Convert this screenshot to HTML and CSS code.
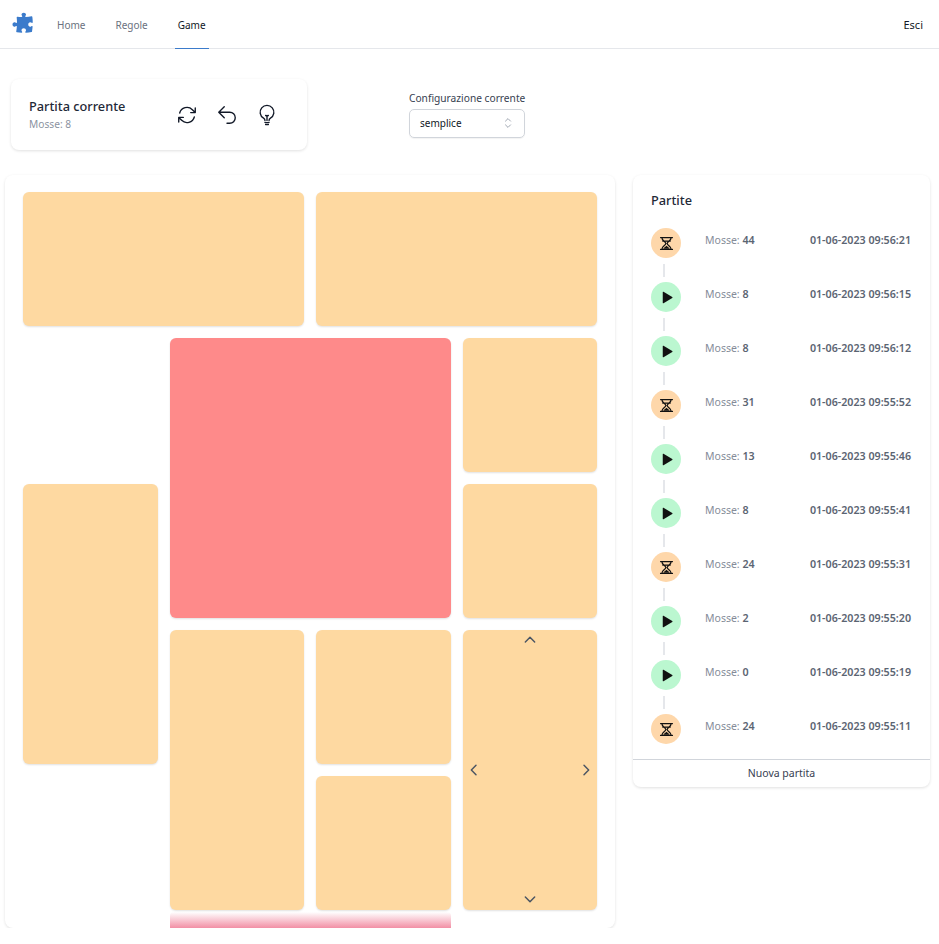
FILE: index.html
```html
<!DOCTYPE html>
<html lang="it">
<head>
  <meta charset="UTF-8" />
  <meta name="viewport" content="width=device-width, initial-scale=1.0" />
  <title>Game</title>
  <link rel="stylesheet" href="styles.css">
</head>
<body>
  <svg class="defs" width="0" height="0">
    <symbol id="hourglass" viewBox="0 0 24 24">
      <path d="M2.500 2.500h19M4.500 2.500c0 5 6 6 6.500 9.500-.5 3.500-6.500 4.500-6.500 9.500M19.500 2.500c0 5-6 6-6.500 9.500.5 3.500 6.500 4.500 6.500 9.500M2.500 21.500h19M6 8h12" fill="none" stroke="currentColor" stroke-width="2" stroke-linecap="round" stroke-linejoin="round"/>
      <path d="M7 20.500c.5-2 3.500-3.500 5-5 1.500 1.500 4.500 3 5 5z" fill="currentColor"/>
    </symbol>
    <symbol id="play" viewBox="0 0 24 24">
      <path d="M6 3.500v17a.8.8 0 0 0 1.200.7l14-8.500a.8.8 0 0 0 0-1.400l-14-8.500A.8.8 0 0 0 6 3.500z" fill="currentColor"/>
    </symbol>
  </svg>

  <nav class="navbar">
    <div class="nav-left">
      <svg class="logo" viewBox="0 0 24 24" fill="currentColor"><path d="M11.250 5.337c0-.355-.186-.676-.401-.959a1.560 1.560 0 0 1-.349-.878c0-1.036 1.007-1.875 2.250-1.875S15 2.464 15 3.500c0 .322-.1.626-.349.878-.215.283-.401.604-.401.959 0 .332.278.598.610.578 1.910-.114 3.790-.342 5.632-.676a.75.75 0 0 1 .878.645 49.170 49.170 0 0 1 .376 5.452.657.657 0 0 1-.660.664c-.354 0-.675-.186-.958-.401a1.647 1.647 0 0 0-1.003-.349c-1.035 0-1.875 1.007-1.875 2.250s.84 2.250 1.875 2.250c.369 0 .713-.128 1.003-.349.283-.215.604-.401.959-.401.310 0 .557.262.534.571a48.774 48.774 0 0 1-.595 4.845.75.75 0 0 1-.610.610c-1.820.317-3.673.533-5.555.642a.58.58 0 0 1-.611-.581c0-.355.186-.676.401-.959.221-.29.349-.634.349-1.003 0-1.035-1.007-1.875-2.250-1.875s-2.250.84-2.250 1.875c0 .369.128.713.349 1.003.215.283.401.604.401.959a.641.641 0 0 1-.658.643 49.118 49.118 0 0 1-4.708-.36.75.75 0 0 1-.645-.878c.293-1.614.504-3.257.629-4.924A.53.53 0 0 0 5.337 15c-.355 0-.676.186-.959.401-.29.221-.634.349-1.003.349-1.036 0-1.875-1.007-1.875-2.250s.84-2.250 1.875-2.250c.369 0 .713.128 1.003.349.283.215.604.401.959.401a.656.656 0 0 0 .659-.663 47.703 47.703 0 0 0-.31-4.820.75.75 0 0 1 .83-.832c1.343.155 2.703.254 4.077.294a.64.64 0 0 0 .657-.642z"/></svg>
      <a class="nav-link" href="#">Home</a>
      <a class="nav-link" href="#">Regole</a>
      <a class="nav-link active" href="#">Game</a>
    </div>
    <a class="logout" href="#">Esci</a>
  </nav>

  <section class="toolbar">
    <div class="current-card">
      <div class="current-info">
        <h3>Partita corrente</h3>
        <p>Mosse: 8</p>
      </div>
      <div class="actions">
        <svg viewBox="0 0 24 24" class="action"><path d="M16.023 9.348h4.992v-.001M2.985 19.644v-4.992m0 0h4.992m-4.993 0 3.181 3.183a8.250 8.250 0 0 0 13.803-3.700M4.031 9.865a8.250 8.250 0 0 1 13.803-3.700l3.181 3.182m0-4.991v4.990"/></svg>
        <svg viewBox="0 0 24 24" class="action"><path d="M9 15 3 9m0 0 6-6M3 9h12a6 6 0 0 1 0 12h-3"/></svg>
        <svg viewBox="0 0 24 24" class="action"><path d="M12 18v-5.250m0 0a6.010 6.010 0 0 0 1.500-.189m-1.500.189a6.010 6.010 0 0 1-1.500-.189m3.750 7.478a12.060 12.060 0 0 1-4.500 0m3.750 2.383a14.406 14.406 0 0 1-3 0M14.250 18v-.192c0-.983.658-1.823 1.508-2.316a7.500 7.500 0 1 0-7.517 0c.85.493 1.509 1.333 1.509 2.316V18"/></svg>
      </div>
    </div>
    <div class="config">
      <label>Configurazione corrente</label>
      <div class="select">
        <span>semplice</span>
        <svg viewBox="0 0 20 20"><path d="M6.500 8 10 4.500 13.500 8M6.500 12 10 15.500 13.500 12"/></svg>
      </div>
    </div>
  </section>

  <main class="content">
    <div class="board-card">
      <div class="board">
        <div class="piece p-a"></div>
        <div class="piece p-b"></div>
        <div class="piece p-c"></div>
        <div class="piece red p-d"></div>
        <div class="piece p-e"></div>
        <div class="piece p-f"></div>
        <div class="piece p-g"></div>
        <div class="piece p-h"></div>
        <div class="piece p-i"></div>
        <div class="piece p-j">
          <svg class="arrow up" viewBox="0 0 24 24"><path d="m5 15 7-7 7 7"/></svg>
          <svg class="arrow left" viewBox="0 0 24 24"><path d="m15 5-7 7 7 7"/></svg>
          <svg class="arrow right" viewBox="0 0 24 24"><path d="m9 5 7 7-7 7"/></svg>
          <svg class="arrow down" viewBox="0 0 24 24"><path d="m5 9 7 7 7-7"/></svg>
        </div>
        <div class="exit"></div>
      </div>
    </div>

    <aside class="games-card">
      <h3>Partite</h3>
      <ul class="games">
        <li><span class="dot lost"><svg><use href="#hourglass"/></svg></span><span class="moves">Mosse: <b>44</b></span><b class="date">01-06-2023 09:56:21</b></li>
        <li><span class="dot won"><svg><use href="#play"/></svg></span><span class="moves">Mosse: <b>8</b></span><b class="date">01-06-2023 09:56:15</b></li>
        <li><span class="dot won"><svg><use href="#play"/></svg></span><span class="moves">Mosse: <b>8</b></span><b class="date">01-06-2023 09:56:12</b></li>
        <li><span class="dot lost"><svg><use href="#hourglass"/></svg></span><span class="moves">Mosse: <b>31</b></span><b class="date">01-06-2023 09:55:52</b></li>
        <li><span class="dot won"><svg><use href="#play"/></svg></span><span class="moves">Mosse: <b>13</b></span><b class="date">01-06-2023 09:55:46</b></li>
        <li><span class="dot won"><svg><use href="#play"/></svg></span><span class="moves">Mosse: <b>8</b></span><b class="date">01-06-2023 09:55:41</b></li>
        <li><span class="dot lost"><svg><use href="#hourglass"/></svg></span><span class="moves">Mosse: <b>24</b></span><b class="date">01-06-2023 09:55:31</b></li>
        <li><span class="dot won"><svg><use href="#play"/></svg></span><span class="moves">Mosse: <b>2</b></span><b class="date">01-06-2023 09:55:20</b></li>
        <li><span class="dot won"><svg><use href="#play"/></svg></span><span class="moves">Mosse: <b>0</b></span><b class="date">01-06-2023 09:55:19</b></li>
        <li><span class="dot lost"><svg><use href="#hourglass"/></svg></span><span class="moves">Mosse: <b>24</b></span><b class="date">01-06-2023 09:55:11</b></li>
      </ul>
      <button class="new-game">Nuova partita</button>
    </aside>
  </main>
</body>
</html>
```

FILE: styles.css
```css
* {
  box-sizing: border-box;
}
body {
  margin: 0;
  font-family: "Noto Sans", sans-serif;
  background: #fff;
  color: #111827;
  overflow: hidden;
}
.defs {
  display: none;
}
.navbar {
  height: 49px;
  display: flex;
  align-items: center;
  justify-content: space-between;
  padding: 0 16px 0 11px;
  border-bottom: 1px solid #e5e7eb;
}
.nav-left {
  display: flex;
  align-items: center;
  height: 100%;
}
.logo {
  width: 24px;
  height: 24px;
  color: #3b7bcb;
  margin-right: 19px;
  margin-bottom: 3px;
}
.nav-link {
  height: 49px;
  line-height: 50px;
  padding: 0 3px;
  font-size: 10px;
  color: #6b7280;
  text-decoration: none;
  margin-right: 24px;
}
.nav-link.active {
  color: #111827;
  border-bottom: 1px solid #3b7bcb;
}
.logout {
  font-size: 11px;
  line-height: 49px;
  color: #111827;
  text-decoration: none;
}
.toolbar {
  display: flex;
  padding: 30px 0 0 11px;
  height: 126px;
}
.current-card {
  width: 296px;
  height: 71px;
  display: flex;
  align-items: center;
  justify-content: space-between;
  padding: 0 29px 0 18px;
  border-radius: 8px;
  box-shadow: 0 1px 3px rgba(0, 0, 0, 0.12);
}
.current-info h3 {
  margin: -1px 0 0;
  font-size: 12.750px;
  font-weight: 500;
  line-height: 18px;
  color: #1f2937;
}
.current-info p {
  margin: 2px 0 0;
  font-size: 10.200px;
  line-height: 15px;
  color: #8b93a1;
}
.actions {
  display: flex;
  gap: 18px;
}
.action {
  width: 22px;
  height: 22px;
  fill: none;
  stroke: #111827;
  stroke-width: 1.500;
  stroke-linecap: round;
  stroke-linejoin: round;
}
.config {
  margin: 11px 0 0 102px;
  width: 116px;
}
.config label {
  display: block;
  font-size: 10.200px;
  line-height: 16px;
  color: #374151;
  white-space: nowrap;
}
.select {
  height: 29px;
  margin-top: 3px;
  display: flex;
  align-items: center;
  justify-content: space-between;
  padding: 0 8px 2px 10px;
  border: 1px solid #d1d5db;
  border-radius: 5px;
  font-size: 10px;
  color: #111827;
  box-shadow: 0 1px 1px rgba(0, 0, 0, 0.05);
}
.select svg {
  width: 16px;
  height: 16px;
  fill: none;
  stroke: #9ca3af;
  stroke-width: 1.200;
}
.content {
  display: flex;
  align-items: flex-start;
  padding-left: 5px;
  gap: 18px;
}
.board-card {
  width: 610px;
  height: 753px;
  padding: 17px 18px 0;
  border-radius: 8px;
  overflow: hidden;
  box-shadow: 0 1px 3px rgba(0, 0, 0, 0.12);
}
.board {
  display: grid;
  grid-template-columns: repeat(4, 134.500px);
  grid-template-rows: repeat(5, 134px) 16px;
  gap: 12px;
}
.piece {
  position: relative;
  background: #fed9a1;
  border-radius: 6px;
  box-shadow: 0 1px 2px rgba(0, 0, 0, 0.12);
}
.piece.red {
  background: #fe8a8a;
}
.p-a { grid-area: 1 / 1 / 2 / 3; }
.p-b { grid-area: 1 / 3 / 2 / 5; }
.p-c { grid-area: 3 / 1 / 5 / 2; }
.p-d { grid-area: 2 / 2 / 4 / 4; }
.p-e { grid-area: 2 / 4 / 3 / 5; }
.p-f { grid-area: 3 / 4 / 4 / 5; }
.p-g { grid-area: 4 / 2 / 6 / 3; }
.p-h { grid-area: 4 / 3 / 5 / 4; }
.p-i { grid-area: 5 / 3 / 6 / 4; }
.p-j { grid-area: 4 / 4 / 6 / 5; }
.exit {
  grid-area: 6 / 2 / 7 / 4;
  margin-top: -10px;
  height: 16px;
  border-radius: 4px 4px 0 0;
  background: linear-gradient(to bottom, #fff, #f28fa5);
}
.arrow {
  position: absolute;
  width: 16px;
  height: 16px;
  fill: none;
  stroke: #4b5563;
  stroke-width: 2.200;
  stroke-linecap: round;
  stroke-linejoin: round;
}
.up {
  top: 2px;
  left: 59px;
}
.down {
  bottom: 3px;
  left: 59px;
}
.left {
  top: 132px;
  left: 3px;
}
.right {
  top: 132px;
  right: 3px;
}
.games-card {
  width: 297px;
  height: 612px;
  border-radius: 8px;
  box-shadow: 0 1px 3px rgba(0, 0, 0, 0.12);
  display: flex;
  flex-direction: column;
}
.games-card h3 {
  margin: 0;
  padding: 16px 18px 0;
  font-size: 12.750px;
  font-weight: 500;
  line-height: 18px;
  color: #1f2937;
}
.games {
  list-style: none;
  margin: 19px 0 0;
  padding: 0 19px 0 18px;
  flex: 1;
  min-height: 0;
}
.games li {
  position: relative;
  height: 54px;
  display: flex;
  align-items: flex-start;
  font-size: 10.500px;
  line-height: 25px;
  color: #858c99;
}
.games li + li::before {
  content: "";
  position: absolute;
  left: 12px;
  top: -18px;
  width: 2px;
  height: 13px;
  background: #e5e7eb;
}
.games b {
  font-size: 10.700px;
  font-weight: 600;
  color: #5b6472;
}
.dot {
  width: 30px;
  height: 30px;
  border-radius: 50%;
  display: flex;
  align-items: center;
  justify-content: center;
  color: #111;
}
.dot svg {
  width: 15px;
  height: 15px;
}
.lost {
  background: #fed7aa;
}
.won {
  background: #bbf7d0;
}
.moves {
  margin-left: 24px;
}
.date {
  margin-left: auto;
}
.new-game {
  flex-shrink: 0;
  height: 28px;
  border: none;
  border-top: 1px solid #d1d5db;
  background: none;
  font-family: inherit;
  font-size: 10.500px;
  color: #374151;
  padding: 0 0 2px;
}
```
